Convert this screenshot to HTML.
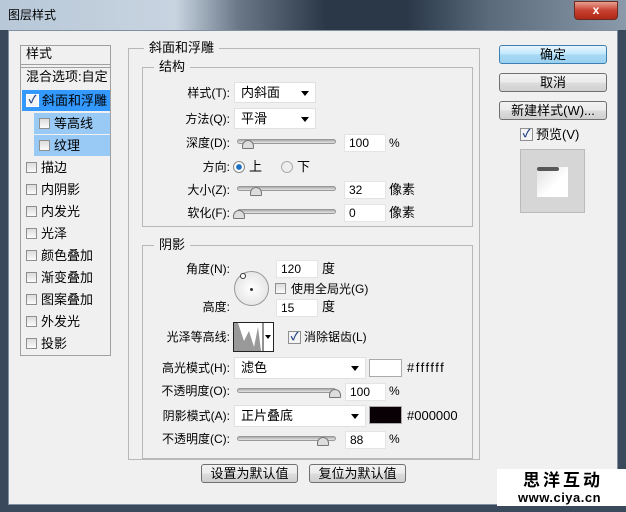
<html><head><style>
*{margin:0;padding:0;box-sizing:border-box}
body{width:626px;height:512px;overflow:hidden;background:#3a4a5c;font-family:"Liberation Sans","Noto Sans CJK SC",sans-serif;font-size:12px;color:#000;position:relative}
.a{position:absolute}
.title{left:0;top:0;width:626px;height:30px;background:linear-gradient(90deg,#b8c8d8 0%,#c8d4e0 28%,#6a7888 38%,#2a3848 52%,#2a3848 65%,#5a6a7a 78%,#8a9aaa 100%)}
.client{left:8px;top:30px;width:610px;height:475px;background:#f0f0f0;border:1px solid #8090a0}
.lbl{white-space:nowrap;line-height:14px}
.r{text-align:right}
.cb{width:11px;height:11px;border:1px solid #8e8f8f;background:linear-gradient(#dcdcdc,#fbfbfb)}
.cbx{width:13px;height:13px;border:1px solid #8e8f8f;background:#f4f4f4;font-size:11px;line-height:11px;text-align:center;color:#224488;font-weight:bold}
.grp{border:1px solid #b8b8b8}
.gl{background:#f0f0f0;padding:0 5px;font-size:13px}
.dd{background:#fff;border:1px solid #e0e0e0;padding-left:6px;line-height:20px;font-size:13px}
.dd:after{content:"";position:absolute;right:6px;top:8px;border:4px solid transparent;border-top:5px solid #000}
.in{background:#fff;border:1px solid #e4e4e4;padding-left:4px;line-height:16px}
.sl{height:5px;border:1px solid #999;border-radius:3px;background:linear-gradient(#aaa,#e6e6e6)}
.th{width:12px;height:9px;border:1px solid #777;background:#ddd;border-radius:6px 6px 1px 1px}
.btn{border:1px solid #707070;border-radius:3px;background:linear-gradient(#f2f2f2 0%,#ebebeb 50%,#dddddd 51%,#cfcfcf 100%);text-align:center;line-height:17px;font-size:13px}
.row{left:22px;width:88px;height:21px;line-height:21px;font-size:13px}
</style></head><body>
<div class="a title"></div>
<div class="a lbl" style="left:8px;top:8px;font-size:12px">图层样式</div>
<div class="a" style="left:574px;top:1px;width:44px;height:19px;border:1px solid #6a2a20;border-radius:0 0 4px 4px;background:linear-gradient(#e8a090,#c84030 50%,#b02818);color:#fff;font-weight:bold;text-align:center;line-height:17px">x</div>
<div class="a client"></div>
<div class="a" style="left:20px;top:45px;width:91px;height:311px;border:1px solid #a0a0a0;background:#f0f0f0"></div>
<div class="a" style="left:21px;top:64px;width:89px;height:1px;background:#a0a0a0"></div>
<div class="a" style="left:21px;top:67px;width:89px;height:1px;background:#a0a0a0"></div>
<div class="a lbl" style="left:26px;top:47px;font-size:13px">样式</div>
<div class="a lbl" style="left:26px;top:70px;font-size:13px">混合选项:自定</div>
<div class="a row" style="top:90px;background:#3399ff;color:#000"><span class="a cbx" style="left:4px;top:4px;border-color:#fff">✓</span><span style="padding-left:20px">斜面和浮雕</span></div>
<div class="a row" style="left:34px;width:76px;top:113px;background:#99c9f5"><span class="a cb" style="left:5px;top:5px"></span><span style="padding-left:20px">等高线</span></div>
<div class="a row" style="left:34px;width:76px;top:135px;background:#99c9f5"><span class="a cb" style="left:5px;top:5px"></span><span style="padding-left:20px">纹理</span></div>
<div class="a row" style="top:157px"><span class="a cb" style="left:4px;top:5px"></span><span style="padding-left:19px">描边</span></div>
<div class="a row" style="top:179px"><span class="a cb" style="left:4px;top:5px"></span><span style="padding-left:19px">内阴影</span></div>
<div class="a row" style="top:201px"><span class="a cb" style="left:4px;top:5px"></span><span style="padding-left:19px">内发光</span></div>
<div class="a row" style="top:223px"><span class="a cb" style="left:4px;top:5px"></span><span style="padding-left:19px">光泽</span></div>
<div class="a row" style="top:245px"><span class="a cb" style="left:4px;top:5px"></span><span style="padding-left:19px">颜色叠加</span></div>
<div class="a row" style="top:267px"><span class="a cb" style="left:4px;top:5px"></span><span style="padding-left:19px">渐变叠加</span></div>
<div class="a row" style="top:289px"><span class="a cb" style="left:4px;top:5px"></span><span style="padding-left:19px">图案叠加</span></div>
<div class="a row" style="top:311px"><span class="a cb" style="left:4px;top:5px"></span><span style="padding-left:19px">外发光</span></div>
<div class="a row" style="top:333px"><span class="a cb" style="left:4px;top:5px"></span><span style="padding-left:19px">投影</span></div>
<div class="a grp" style="left:128px;top:48px;width:352px;height:412px"></div>
<div class="a gl lbl" style="left:144px;top:41px">斜面和浮雕</div>
<div class="a grp" style="left:142px;top:67px;width:331px;height:160px"></div>
<div class="a gl lbl" style="left:154px;top:60px">结构</div>
<div class="a grp" style="left:142px;top:245px;width:331px;height:214px"></div>
<div class="a gl lbl" style="left:154px;top:238px">阴影</div>
<div class="a lbl r" style="left:150px;width:80px;top:86px">样式(T):</div>
<div class="a dd" style="left:234px;top:82px;width:82px;height:21px">内斜面</div>
<div class="a lbl r" style="left:150px;width:80px;top:112px">方法(Q):</div>
<div class="a dd" style="left:234px;top:108px;width:82px;height:21px">平滑</div>
<div class="a lbl r" style="left:150px;width:80px;top:136px">深度(D):</div>
<div class="a sl" style="left:237px;top:139px;width:99px"></div><div class="a th" style="left:242px;top:140px"></div>
<div class="a in" style="left:344px;top:134px;width:42px;height:18px">100</div><div class="a lbl" style="left:389px;top:136px">%</div>
<div class="a lbl r" style="left:150px;width:80px;top:160px">方向:</div>
<div class="a" style="left:233px;top:161px;width:12px;height:12px;border-radius:50%;border:1px solid #888;background:radial-gradient(#1a70c0 35%,#fff 45%)"></div>
<div class="a lbl" style="left:249px;top:160px;font-size:13px">上</div>
<div class="a" style="left:281px;top:161px;width:12px;height:12px;border-radius:50%;border:1px solid #aaa;background:#eee"></div>
<div class="a lbl" style="left:297px;top:160px;font-size:13px">下</div>
<div class="a lbl r" style="left:150px;width:80px;top:183px">大小(Z):</div>
<div class="a sl" style="left:237px;top:186px;width:99px"></div><div class="a th" style="left:250px;top:187px"></div>
<div class="a in" style="left:344px;top:181px;width:42px;height:18px">32</div><div class="a lbl" style="left:389px;top:183px;font-size:13px">像素</div>
<div class="a lbl r" style="left:150px;width:80px;top:206px">软化(F):</div>
<div class="a sl" style="left:237px;top:209px;width:99px"></div><div class="a th" style="left:233px;top:210px"></div>
<div class="a in" style="left:344px;top:204px;width:42px;height:18px">0</div><div class="a lbl" style="left:389px;top:206px;font-size:13px">像素</div>
<div class="a lbl r" style="left:150px;width:80px;top:262px">角度(N):</div>
<div class="a" style="left:234px;top:271px;width:35px;height:35px;border-radius:50%;border:1px solid #999;background:radial-gradient(#fff,#ddd)"></div>
<div class="a" style="left:250px;top:288px;width:3px;height:3px;background:#333;border-radius:50%"></div>
<div class="a" style="left:240px;top:273px;width:6px;height:6px;border:1px solid #333;border-radius:50%;background:#fff"></div>
<div class="a in" style="left:276px;top:260px;width:42px;height:18px">120</div><div class="a lbl" style="left:322px;top:262px;font-size:13px">度</div>
<div class="a cb" style="left:275px;top:283px"></div><div class="a lbl" style="left:291px;top:282px">使用全局光(G)</div>
<div class="a lbl r" style="left:150px;width:80px;top:300px">高度:</div>
<div class="a in" style="left:276px;top:299px;width:42px;height:18px">15</div><div class="a lbl" style="left:322px;top:300px;font-size:13px">度</div>
<div class="a lbl r" style="left:150px;width:80px;top:330px">光泽等高线:</div>
<div class="a" style="left:233px;top:322px;width:41px;height:30px;border:1px solid #222;background:#fff">
<svg width="39" height="28" style="position:absolute;left:0;top:0"><path d="M0 0 L4 0 L10 18 L15 8 L20 24 L24 4 L27 28 L0 28Z" fill="#999"/><line x1="29" y1="0" x2="29" y2="28" stroke="#222"/><path d="M31 12 L37 12 L34 16Z" fill="#000"/></svg></div>
<div class="a cbx" style="left:288px;top:331px">✓</div><div class="a lbl" style="left:304px;top:330px">消除锯齿(L)</div>
<div class="a lbl r" style="left:150px;width:80px;top:361px">高光模式(H):</div>
<div class="a dd" style="left:234px;top:357px;width:132px;height:22px">滤色</div>
<div class="a" style="left:369px;top:359px;width:33px;height:18px;background:#fff;border:1px solid #aaa"></div>
<div class="a lbl" style="left:407px;top:361px;font-size:13px;letter-spacing:1.5px">#ffffff</div>
<div class="a lbl r" style="left:150px;width:80px;top:384px">不透明度(O):</div>
<div class="a sl" style="left:237px;top:388px;width:99px"></div><div class="a th" style="left:329px;top:389px"></div>
<div class="a in" style="left:345px;top:383px;width:41px;height:18px">100</div><div class="a lbl" style="left:389px;top:384px">%</div>
<div class="a lbl r" style="left:150px;width:80px;top:409px">阴影模式(A):</div>
<div class="a dd" style="left:234px;top:405px;width:132px;height:22px">正片叠底</div>
<div class="a" style="left:369px;top:406px;width:33px;height:18px;background:#080004;border:1px solid #aaa"></div>
<div class="a lbl" style="left:407px;top:409px;font-size:13px">#000000</div>
<div class="a lbl r" style="left:150px;width:80px;top:432px">不透明度(C):</div>
<div class="a sl" style="left:237px;top:436px;width:99px"></div><div class="a th" style="left:317px;top:437px"></div>
<div class="a in" style="left:345px;top:431px;width:41px;height:18px">88</div><div class="a lbl" style="left:389px;top:432px">%</div>
<div class="a btn" style="left:201px;top:464px;width:97px;height:19px">设置为默认值</div>
<div class="a btn" style="left:309px;top:464px;width:97px;height:19px">复位为默认值</div>
<div class="a btn" style="left:499px;top:45px;width:108px;height:19px;border-color:#3c7fb1;background:linear-gradient(#eaf6fd,#bee6fd 50%,#a7d9f5 51%,#9bd0ef)">确定</div>
<div class="a btn" style="left:499px;top:73px;width:108px;height:19px">取消</div>
<div class="a btn" style="left:499px;top:101px;width:108px;height:19px">新建样式(W)...</div>
<div class="a cbx" style="left:520px;top:128px">✓</div><div class="a lbl" style="left:536px;top:128px;font-size:13px">预览(V)</div>
<div class="a" style="left:520px;top:149px;width:65px;height:64px;background:#d6d6d6;border:1px solid #bbb"></div>
<div class="a" style="left:537px;top:167px;width:31px;height:30px;background:linear-gradient(135deg,#e0e0e0,#fff 60%)"></div>
<div class="a" style="left:537px;top:167px;width:22px;height:4px;background:#333;border-radius:2px;opacity:.8"></div>
<div class="a" style="left:497px;top:469px;width:129px;height:37px;background:#fff"></div>
<div class="a lbl" style="left:523px;top:474px;font-size:17px;font-weight:bold;letter-spacing:3px">思洋互动</div>
<div class="a lbl" style="left:518px;top:491px;font-size:13px;font-weight:bold;letter-spacing:.5px">www.ciya.cn</div>
</body></html>
